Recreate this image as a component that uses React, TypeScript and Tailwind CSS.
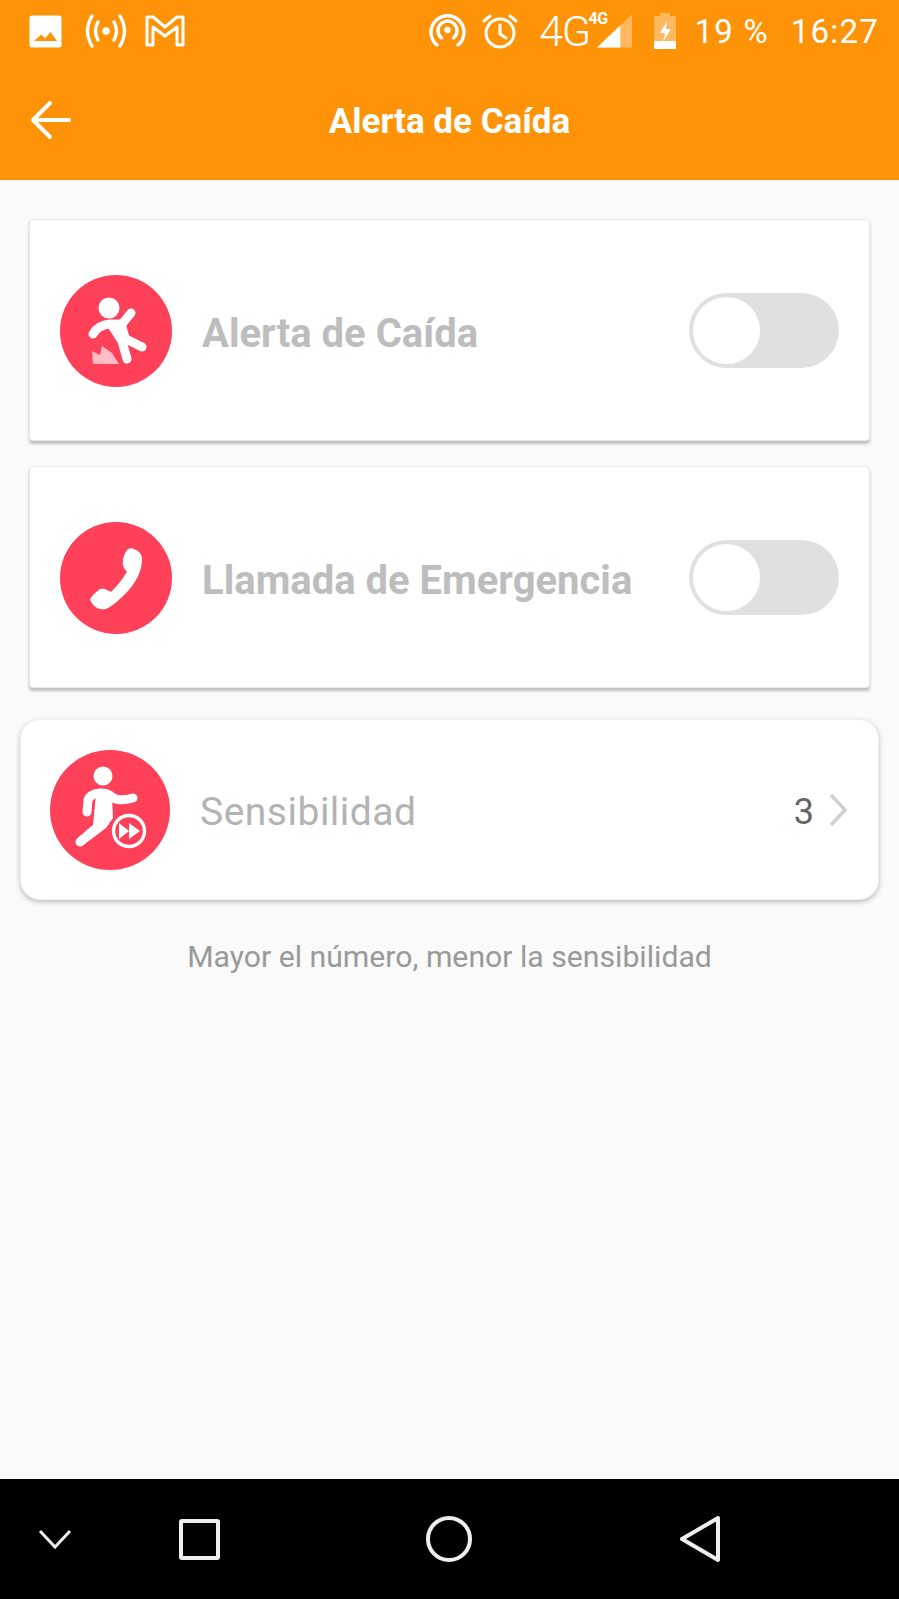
import React from "react";

const F = { fontFamily: "Roboto, sans-serif" };

function StatusBar() {
  return (
    <div className="flex items-center h-[62px] pl-[29px] pr-[20px] text-white">
      <svg width="33" height="33" viewBox="0 0 33 33"><path fillRule="evenodd" fill="#fff" d="M3 0.5h27a2.5 2.5 0 0 1 2.5 2.5v27a2.5 2.5 0 0 1-2.5 2.5h-27a2.5 2.5 0 0 1-2.5-2.5v-27a2.5 2.5 0 0 1 2.5-2.5zM5 26h23l-6.5-9-5.5 6.5-3.5-4z" /></svg>
      <svg className="ml-[22px]" width="44" height="34" viewBox="0 0 44 34" fill="none" stroke="#fff" strokeWidth="3.4" strokeLinecap="round"><circle cx="22" cy="17" r="3.8" fill="#fff" stroke="none" /><path d="M8 2Q-1 17 8 32M36 2Q45 17 36 32M14 8Q9 17 14 26M30 8Q35 17 30 26" /></svg>
      <svg className="ml-[17px]" width="40" height="32" viewBox="0 0 40 32" fill="none" stroke="#fff" strokeWidth="3" strokeLinejoin="round"><path d="M2 2h6l12 10L32 2h6v28h-6V12L20 21 8 12v18H2z" /></svg>
      <div className="flex-1" />
      <svg width="37" height="36" viewBox="0 0 37 36" fill="none" stroke="#fff" strokeWidth="3.4" strokeLinecap="round"><circle cx="18.5" cy="17" r="3.2" fill="#fff" stroke="none" /><path d="M8 32A16.5 16.5 0 1 1 29 32M12.5 25A9.5 9.5 0 1 1 24.5 25" /></svg>
      <svg className="ml-[16px]" width="36" height="36" viewBox="0 0 36 36" fill="none" stroke="#fff" strokeWidth="3" strokeLinecap="round"><circle cx="18" cy="20" r="14" /><path d="M18 12v9l6 4M2 8l6-5M34 8l-6-5" /></svg>
      <span className="ml-[21px] text-[43px] font-light leading-none tracking-[-1.5px]" style={F}>4G</span>
      <div className="relative w-[43px] h-[36px] self-center">
        <svg className="absolute right-[1px] bottom-[-1px]" width="35" height="36" viewBox="0 0 36 36"><path d="M36 0V34H0z" fill="#fff" fillOpacity="0.35" /><path d="M24 11V34H0z" fill="#fff" /></svg>
        <span className="absolute left-[-1px] top-[-2px] text-[16px] font-bold leading-none tracking-[-0.5px]" style={F}>4G</span>
      </div>
      <svg className="ml-[20px]" width="24" height="36" viewBox="0 0 24 36"><path d="M7 0h10v3h6v33H1V3h6z" fill="#fff" fillOpacity="0.35" /><path d="M1 28h22v8H1z" fill="#fff" /><path d="M14 8L7 20h5l-2 9 8-13h-5z" fill="#fff" /></svg>
      <span className="ml-[18px] text-[33px] leading-none tracking-[1.2px]" style={F}>19 %</span>
      <span className="ml-[22px] text-[33px] leading-none tracking-[1.2px]" style={F}>16:27</span>
    </div>
  );
}

function FallIcon() {
  return (
    <svg width="112" height="112" viewBox="0 0 112 112" className="shrink-0">
      <circle cx="56" cy="56" r="56" fill="#ff4059" />
      <circle cx="49" cy="33" r="10.5" fill="#fff" />
      <path d="M33 59Q38 50 50 49Q58 49 62 49L71 38" fill="none" stroke="#fff" strokeWidth="9" strokeLinecap="round" strokeLinejoin="round" />
      <path d="M53 52L62 66L67 84M62 62L82 72" fill="none" stroke="#fff" strokeWidth="9" strokeLinecap="round" strokeLinejoin="round" />
      <path d="M50 46L65 46L70 64L60 70z" fill="#fff" />
      <path d="M32 76L40 80L42 71L52 78L59 89H33z" fill="#fff" fillOpacity="0.65" />
    </svg>
  );
}

function PhoneIcon() {
  return (
    <svg width="112" height="112" viewBox="0 0 112 112" className="shrink-0">
      <circle cx="56" cy="56" r="56" fill="#ff4059" />
      <path fill="#fff" d="M67 28Q70 25 74 27Q82 30 82 37Q82 48 76 58Q70 68 62 75Q54 83 46 87Q41 88 37 86Q31 82 30 77Q34 71 40 67Q44 66 47 68L51 70Q58 63 63 56Q66 51 67 50L64 46Q62 42 63 37Q64 32 67 28z" />
    </svg>
  );
}

function RunIcon() {
  return (
    <svg width="120" height="120" viewBox="0 0 120 120" className="shrink-0">
      <circle cx="60" cy="60" r="60" fill="#ff4059" />
      <circle cx="53" cy="26" r="9.5" fill="#fff" />
      <path d="M37 62L38 50Q40 44 50 43Q58 43 62 47Q68 52 83 48" fill="none" stroke="#fff" strokeWidth="9" strokeLinecap="round" strokeLinejoin="round" />
      <path d="M46 44L62 46L63 68L56 78L32 96L27 89L43 75z" fill="#fff" />
      <path d="M30 92L44 80" fill="none" stroke="#fff" strokeWidth="9" strokeLinecap="round" />
      <circle cx="79" cy="81" r="20" fill="#ff4059" />
      <circle cx="79" cy="81" r="15.5" fill="none" stroke="#fff" strokeWidth="3.4" />
      <path d="M69 73L79 81L69 89zM79 73L90 81L79 89z" fill="#fff" />
    </svg>
  );
}

function Toggle() {
  return (
    <div className="w-[150px] h-[75px] mb-[2px] rounded-full bg-[#e0e0e0] p-[4px] shrink-0">
      <div className="w-[67px] h-[67px] rounded-full bg-white" />
    </div>
  );
}

function SwitchCard({ icon, label }: { icon: React.ReactNode; label: string }) {
  return (
    <div className="mx-[29px] h-[222px] flex items-center pt-[2px] pl-[30px] pr-[30px] bg-white rounded-[4px] border border-[#e8e8e8] shadow-[0_3px_3px_rgba(0,0,0,0.24)]">
      {icon}
      <span className="ml-[30px] pt-[6px] flex-1 text-[40px] font-bold text-[#bdbdbd] leading-none" style={F}>{label}</span>
      <Toggle />
    </div>
  );
}

export default function App() {
  return (
    <div className="w-[899px] h-[1599px] flex flex-col bg-[#fafafa]" style={F}>
      <header className="h-[180px] bg-[#ff9308] shrink-0">
        <StatusBar />
        <div className="relative flex items-center justify-center h-[118px]">
          <svg className="absolute left-[30px] top-[38px]" width="42" height="40" viewBox="0 0 42 40" fill="none" stroke="#fff" strokeWidth="4" strokeLinecap="round" strokeLinejoin="round"><path d="M3 20H39M20 3L3 20L20 37" /></svg>
          <h1 className="text-[35px] font-bold text-white leading-none">Alerta de Caída</h1>
        </div>
      </header>
      <main className="flex-1 pt-[39px]">
        <SwitchCard icon={<FallIcon />} label="Alerta de Caída" />
        <div className="h-[25px]" />
        <SwitchCard icon={<PhoneIcon />} label="Llamada de Emergencia" />
        <div className="mx-[20px] mt-[31px] h-[181px] flex items-center pl-[29px] pr-[30px] bg-white rounded-[20px] border border-[#f0f0f0] shadow-[0_2px_5px_rgba(0,0,0,0.25)]">
          <RunIcon />
          <span className="ml-[30px] pt-[5px] flex-1 text-[39px] text-[#b3b3b3] leading-none tracking-[0.5px]">Sensibilidad</span>
          <span className="pt-[4px] text-[36px] text-[#666] leading-none">3</span>
          <svg className="ml-[14px]" width="20" height="34" viewBox="0 0 20 34" fill="none" stroke="#d0d0d0" strokeWidth="3.5"><path d="M3 2L17 17L3 32" /></svg>
        </div>
        <p className="mt-[42px] text-center text-[30.2px] text-[#999] leading-none">Mayor el número, menor la sensibilidad</p>
      </main>
      <nav className="relative h-[120px] bg-black shrink-0 flex items-center">
        <svg className="ml-[38px]" width="34" height="20" viewBox="0 0 34 20" fill="none" stroke="#eee" strokeWidth="3"><path d="M2 2L17 18L32 2" /></svg>
        <div className="ml-[107px] w-[41px] h-[41px] border-[4px] border-[#eee] rounded-[3px]" />
        <div className="ml-[206px] w-[46px] h-[46px] border-[4px] border-[#eee] rounded-full" />
        <svg className="ml-[207px]" width="42" height="48" viewBox="0 0 42 48" fill="none" stroke="#eee" strokeWidth="4" strokeLinejoin="round"><path d="M39 3V45L3 24z" /></svg>
      </nav>
    </div>
  );
}
